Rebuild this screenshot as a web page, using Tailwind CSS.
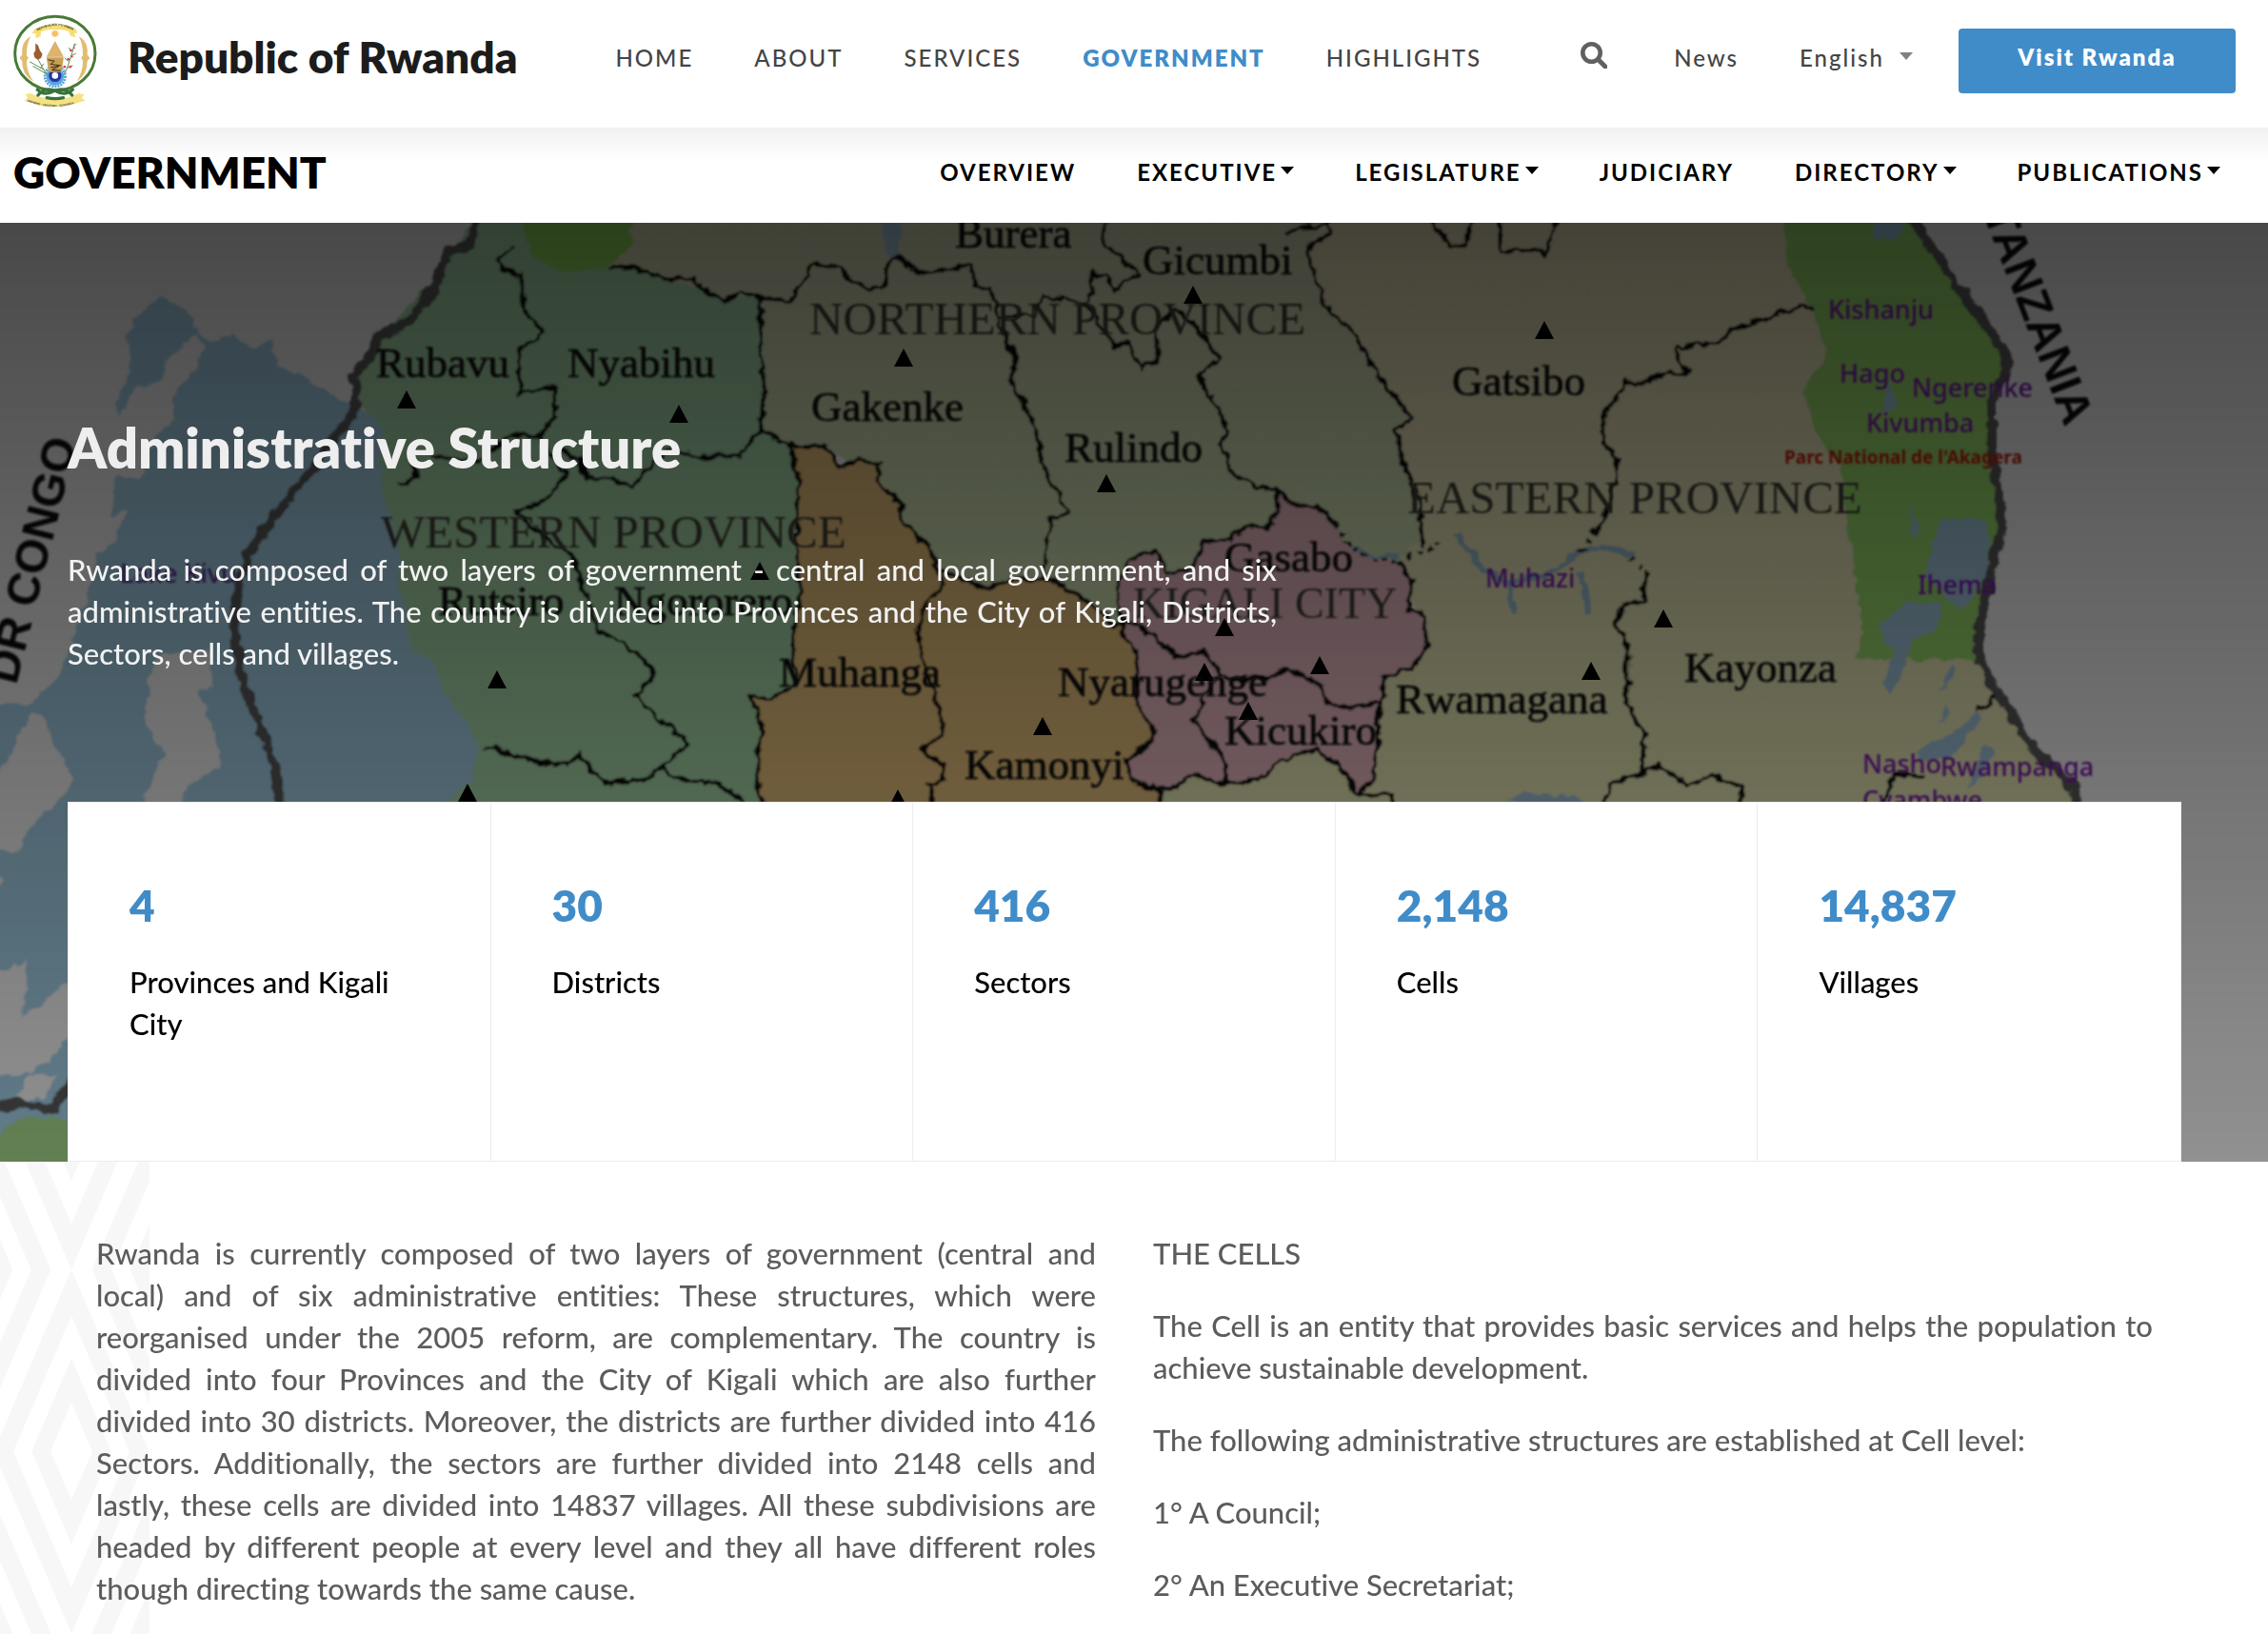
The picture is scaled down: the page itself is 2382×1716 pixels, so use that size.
<!DOCTYPE html>
<html lang="en">
<head>
    <meta charset="UTF-8">
    <meta name="viewport" content="width=device-width, initial-scale=1.0">
    <title>Administrative Structure - Republic of Rwanda</title>
    <script src="https://cdn.jsdelivr.net/npm/@tailwindcss/browser@4"></script>
    <style>
        body {
            font-family: Lato, 'Liberation Sans', sans-serif;
            font-variant-ligatures: no-common-ligatures;
        }
    </style>
</head>
<body class="bg-white min-h-screen flex flex-col overflow-x-hidden">

    <!-- Top bar -->
    <header class="flex items-center h-[134px] pl-3.5 pr-[34px] pb-1.5 whitespace-nowrap">
        <a href="#" class="flex items-center gap-8" aria-label="Republic of Rwanda home">
            <svg class="w-[88px] h-[98px] shrink-0" viewBox="42 44 265 295" aria-hidden="true">
                <defs>
                    <path id="arcTop" d="M118 97 Q172 64 228 94"/>
                    <path id="arcBottom" d="M88 312 Q172 346 254 312"/>
                </defs>
                <ellipse cx="174" cy="168" rx="127" ry="117" fill="#fff" stroke="#487a35" stroke-width="9"/>
                <path d="M101 104 L110 90 Q172 62 238 88 L245 102 L234 106 L240 118 L222 112 L218 98 Q172 84 130 98 L128 114 L112 120 L114 106 Z" fill="#f5df72"/>
                <text font-size="10" font-weight="700" fill="#333" font-family="Liberation Sans"><textPath href="#arcTop">REPUBULIKA Y'U RWANDA</textPath></text>
                <circle cx="174" cy="105" r="12" fill="#fbe3b0"/>
                <circle cx="174" cy="105" r="7" fill="#f7c46c" stroke="#f0a040" stroke-width="2"/>
                <path d="M97 114 Q66 130 70 172 L62 182 L70 192 Q70 236 106 256 Q84 228 84 190 L90 182 L84 174 Q84 136 97 114 Z M249 114 Q280 130 276 172 L284 182 L276 192 Q276 236 242 256 Q262 228 262 190 L256 182 L262 174 Q262 136 249 114 Z" fill="#e1bd70"/>
                <circle cx="174" cy="240" r="32" fill="none" stroke="#5aa2e0" stroke-width="9" stroke-dasharray="6 3"/>
                <circle cx="174" cy="240" r="28" fill="#5aa2e0"/>
                <circle cx="174" cy="238" r="15" fill="#fff" stroke="#2436a0" stroke-width="10"/>
                <path d="M174 130 L200 178 H148 Z" fill="#dfb468" stroke="#b98d47" stroke-width="1"/>
                <path d="M147 180 H201 L195 227 H154 Z" fill="#c99f55"/>
                <path d="M152 188 L172 192 L160 202 L192 206 M160 212 L186 208 L164 220 L192 222" fill="none" stroke="#3a2c15" stroke-width="3"/>
                <g stroke="#5f8f4c" stroke-width="3" fill="none">
                    <path d="M150 238 Q132 210 120 186 M140 220 L94 194 M146 232 L104 208 M128 214 L138 200"/>
                    <path d="M202 236 Q220 200 236 136 M212 214 L230 206 M218 194 L204 182 M224 176 L240 168 M228 160 L216 150 M232 146 L242 138"/>
                </g>
                <path d="M112 136 L120 142 L126 158 L134 170 L130 182 L120 188 L110 182 L106 168 L112 158 Z" fill="#9c5b31"/>
                <g fill="#cf4560">
                    <circle cx="224" cy="158" r="4"/><circle cx="234" cy="150" r="3"/><circle cx="216" cy="186" r="4"/><circle cx="222" cy="210" r="4"/><circle cx="204" cy="210" r="4"/><circle cx="228" cy="178" r="3"/>
                </g>
                <path d="M80 298 L96 294 Q172 330 248 294 L266 298 L258 308 L270 318 L254 322 Q172 352 92 322 L76 318 L88 308 Z" fill="#f5e284"/>
                <text font-size="9" font-weight="700" fill="#444" font-family="Liberation Sans" dy="7"><textPath href="#arcBottom">UBUMWE - UMURIMO - GUKUNDA</textPath></text>
                <g fill="none" stroke="#38733a" stroke-width="10" stroke-linecap="round">
                    <path d="M118 282 Q140 304 172 286 Q206 272 228 300"/>
                    <path d="M230 282 Q206 304 174 286 Q142 272 120 300"/>
                    <path d="M148 308 Q174 314 200 308"/>
                </g>
            </svg>
            <span class="text-[46px] leading-[52px] font-extrabold text-[#1c1c1c] pb-2">Republic of Rwanda</span>
        </a>

        <nav class="flex items-center gap-16 ml-[103px] pb-1.5 text-[24px] leading-8 tracking-[2px] font-medium text-[#444]">
            <a href="#">HOME</a>
            <a href="#">ABOUT</a>
            <a href="#">SERVICES</a>
            <a href="#" class="font-extrabold text-[#408cc9]">GOVERNMENT</a>
            <a href="#">HIGHLIGHTS</a>
        </nav>

        <div class="flex items-center ml-auto text-[24px] leading-8 tracking-[2px] text-[#444]">
            <button type="button" aria-label="Search" class="mr-[70px] pb-3">
                <svg class="w-7 h-7 block" viewBox="0 0 28 28" fill="none" stroke="#606060">
                    <circle cx="11.500" cy="11.500" r="9.200" stroke-width="4.600"/>
                    <path d="M18.500 18.500 L26 26" stroke-width="5" stroke-linecap="round"/>
                </svg>
            </button>
            <a href="#" class="mr-16 pb-1.5 font-medium">News</a>
            <label class="flex items-center gap-4 mr-12 pb-1.5 font-medium">
                <select aria-label="Language" class="appearance-none bg-transparent p-0">
                    <option>English</option>
                </select>
                <svg class="w-3.5 h-2 mb-1" viewBox="0 0 14 8" aria-hidden="true"><path d="M0 0 H14 L7 8 Z" fill="#808080"/></svg>
            </label>
            <a href="#" class="block w-[291px] h-[68px] pt-[14px] rounded bg-[#408cc9] text-white text-center font-extrabold">Visit Rwanda</a>
        </div>
    </header>

    <!-- Section bar -->
    <div class="flex items-center justify-between h-[100px] pl-3.5 pr-[50px] pb-1.5 whitespace-nowrap bg-linear-to-b from-[#f1f1f1] to-white to-35%">
        <h2 class="text-[46px] leading-[52px] font-extrabold text-black">GOVERNMENT</h2>
        <nav class="flex items-center gap-16 text-[24px] leading-8 tracking-[2px] font-bold text-black">
            <a href="#">OVERVIEW</a>
            <button type="button" class="flex items-center gap-1 tracking-[2px]">EXECUTIVE
                <svg class="w-3.5 h-2 mb-1" viewBox="0 0 14 8" aria-hidden="true"><path d="M0 0 H14 L7 8 Z"/></svg></button>
            <button type="button" class="flex items-center gap-1 tracking-[2px]">LEGISLATURE
                <svg class="w-3.5 h-2 mb-1" viewBox="0 0 14 8" aria-hidden="true"><path d="M0 0 H14 L7 8 Z"/></svg></button>
            <a href="#">JUDICIARY</a>
            <button type="button" class="flex items-center gap-1 tracking-[2px]">DIRECTORY
                <svg class="w-3.5 h-2 mb-1" viewBox="0 0 14 8" aria-hidden="true"><path d="M0 0 H14 L7 8 Z"/></svg></button>
            <button type="button" class="flex items-center gap-1 tracking-[2px]">PUBLICATIONS
                <svg class="w-3.5 h-2 mb-1" viewBox="0 0 14 8" aria-hidden="true"><path d="M0 0 H14 L7 8 Z"/></svg></button>
        </nav>
    </div>

    <!-- Hero with the map behind -->
    <section class="relative overflow-hidden bg-[#f2f2f2]">
        <svg class="absolute inset-0 w-full h-full" viewBox="0 234 2382 986" preserveAspectRatio="xMidYMid slice" aria-hidden="true">
            <defs>
                <!-- roughens the borders and softens them a little -->
                <filter id="rough" x="-100" y="134" width="2582" height="1186" filterUnits="userSpaceOnUse">
                    <feTurbulence type="fractalNoise" baseFrequency="0.080" numOctaves="2" seed="4" result="n"/>
                    <feDisplacementMap in="SourceGraphic" in2="n" scale="11" xChannelSelector="R" yChannelSelector="G"/>
                    <feGaussianBlur stdDeviation="1"/>
                </filter>
                <filter id="soft" x="-100" y="134" width="2582" height="1186" filterUnits="userSpaceOnUse">
                    <feGaussianBlur stdDeviation="0.800"/>
                </filter>
                <linearGradient id="eastFill" x1="0" y1="0" x2="0" y2="1">
                    <stop offset="0" stop-color="#e4dcb8"/>
                    <stop offset="1" stop-color="#e6e6b4"/>
                </linearGradient>
                <linearGradient id="northFill" x1="0" y1="0" x2="0" y2="1">
                    <stop offset="0" stop-color="#d6d6b4"/>
                    <stop offset="0.500" stop-color="#cfdab2"/>
                    <stop offset="1" stop-color="#cee0b0"/>
                </linearGradient>
            </defs>

            <g filter="url(#rough)">
                <!-- Lake Kivu -->
                <path fill="#a3cfe6" d="M168 311 L196 325 L207 349 L224 358 L247 353 L265 366 L286 356 L291 384 L327 400 L367 424 L403 440 L560 700 L560 1240 L-20 1240 L-20 738 L31 740 L66 704 L82 657 L92 625 L102 586 L122 566 L133 534 L117 542 L122 499 L148 503 L163 459 L181 440 L181 416 L205 390 L215 362 L205 352 L180 372 L168 400 L143 408 L125 438 L122 424 L138 380 L133 353 L143 333 Z"/>
                <path fill="#f2f2f2" d="M33 748 L45 752 L60 790 L77 819 L60 842 L31 870 L20 895 L-20 890 L-20 820 L8 800 Z M173 685 L219 685 L224 720 L208 725 L230 780 L230 807 L199 823 L189 850 L145 850 L173 791 L153 764 L158 704 Z M31 1010 L23 1070 L72 1030 L90 1050 L60 1107 L31 1127 L-20 1130 L-20 1025 Z M31 1130 L61 1130 L46 1153 L15 1153 Z M-20 900 L6 925 L-20 950 Z"/>
                <!-- Western province -->
                <path fill="#a6d6a8" d="M500 224 L680 224 L672 283 L740 305 L760 315 L800 309 L803 400 L799 451 L831 471 L839 507 L836 566 L841 625 L831 673 L836 720 L811 732 L788 730 L800 764 L795 803 L800 860 L450 860 L495 819 L503 784 L490 760 L467 728 L454 693 L434 685 L421 617 L418 566 L403 523 L398 483 L403 451 L375 420 L372 394 L398 353 L462 289 Z"/>
                <path fill="#a4d68c" d="M-20 1210 L10 1182 L31 1172 L90 1178 L90 1240 L-20 1240 Z"/>
                <!-- Northern province -->
                <path fill="url(#northFill)" d="M660 224 L1395 224 L1395 246 L1374 258 L1377 281 L1392 321 L1423 353 L1448 396 L1484 440 L1466 451 L1474 487 L1489 523 L1494 562 L1469 595 L1341 620 L1200 660 L985 620 L940 530 L868 468 L831 471 L799 451 L803 400 L800 309 L760 315 L740 305 L699 293 L668 283 L640 281 Z"/>
                <path fill="#8fd85c" d="M545 224 L668 224 L660 262 L636 282 L590 284 L560 270 Z"/>
                <!-- Southern province -->
                <path fill="#e5c07c" d="M829 467 L868 468 L882 491 L900 483 L923 487 L923 507 L946 530 L948 550 L976 574 L984 594 L1004 606 L1035 617 L1066 607 L1106 609 L1137 629 L1178 661 L1193 685 L1196 712 L1193 740 L1214 768 L1203 784 L1183 799 L1188 819 L1219 833 L1219 860 L798 860 L795 803 L800 764 L788 730 L811 732 L836 720 L831 673 L841 625 L836 566 L839 507 Z"/>
                <!-- Eastern province -->
                <path fill="url(#eastFill)" d="M1395 224 L2011 224 L2089 345 L2110 380 L2092 420 L2103 546 L2079 657 L2079 693 L2100 732 L2137 788 L2179 827 L2181 860 L1219 860 L1219 833 L1453 712 L1499 677 L1469 590 L1494 562 L1489 523 L1474 487 L1466 451 L1484 440 L1448 396 L1423 353 L1392 321 L1377 281 L1374 258 Z"/>
                <!-- Akagera park -->
                <path fill="#9ad86c" d="M1872 224 L1877 270 L1890 301 L1903 325 L1919 372 L1893 408 L1909 455 L1932 491 L1943 566 L1951 625 L1958 665 L1948 692 L2079 692 L2079 657 L2103 546 L2092 420 L2110 380 L2089 345 L2011 224 Z"/>
                <!-- Kigali -->
                <path fill="#e6b8c0" d="M1341 515 L1357 530 L1382 530 L1402 550 L1418 574 L1443 586 L1469 590 L1484 610 L1479 641 L1494 645 L1499 677 L1484 700 L1453 712 L1448 760 L1443 815 L1428 835 L1408 807 L1382 787 L1346 799 L1321 819 L1285 823 L1254 813 L1229 831 L1188 819 L1183 799 L1203 784 L1214 768 L1193 740 L1196 712 L1193 685 L1178 661 L1173 617 L1188 586 L1214 578 L1224 602 L1249 598 L1265 570 L1290 566 L1311 552 L1331 558 L1341 538 Z"/>
                <!-- eastern lakes -->
                <g fill="#a0c4da">
                    <path d="M1968 224 L2000 224 L1998 246 L1982 255 L1968 248 Z M2040 544 L2085 545 L2090 580 L2084 610 L2060 640 L2048 632 L2022 605 L2030 565 Z M2000 635 L2040 630 L2036 660 L2010 672 L1996 712 L1984 730 L1978 718 L1990 680 L1976 676 L1975 655 Z M2050 697 L2054 705 L2044 722 L2036 726 Z M2078 745 L2082 755 L2050 795 L2020 800 L2012 790 L2052 770 Z M2085 780 L2094 790 L2080 820 L2066 826 Z M2006 535 L2016 550 L2014 565 L2006 560 Z M1984 395 L1990 430 L1976 436 Z M2045 740 L2048 750 L2036 760 Z M1580 842 L1600 834 L1650 836 L1680 848 Z M928 234 L946 234 L943 272 L932 274 Z"/>
                </g>
                <path fill="none" stroke="#94bccf" stroke-width="6" d="M1418 574 L1443 584 L1470 584 M1530 560 L1556 598 L1585 612 M1620 606 L1660 580 L1690 574 L1715 582 M1585 612 L1590 645 M1660 600 L1668 644 M1585 612 L1620 604"/>

                <!-- district borders -->
                <g fill="none" stroke="#0c0c0c" stroke-width="4.500" stroke-linejoin="round">
                    <path d="M541 258 L523 273 L528 283 L548 289 L548 321 L570 349 L545 368 L546 412 L582 406 L584 436 L566 459 L594 499 L571 526 L541 536 L566 558 L602 586 L628 663 L653 673 L689 706 L668 732 L722 780 L696 807 L673 819 L633 823 L607 791 L597 803 L561 799 L510 784"/>
                    <path d="M696 807 L714 819 L750 821 L781 842"/>
                    <path d="M640 281 L668 283 L699 293 L724 291 L740 305 L760 315 L780 307 L800 313 L831 317 L841 299 L854 277 L879 281 L913 305 L928 303 L933 273 L943 270 L964 287 L1020 279 L1025 301 L1040 305 L1050 341 L1066 376 L1061 400 L1086 444 L1096 491 L1122 538 L1104 546 L1096 594 L1096 608"/>
                    <path d="M1045 333 L1086 331 L1094 311 L1142 319 L1158 345 L1170 364 L1186 360 L1198 386 L1216 380 L1214 345 L1234 325 L1254 341 L1280 376 L1260 396 L1288 447 L1283 467 L1295 499 L1321 511 L1341 515"/>
                    <path d="M1160 234 L1158 254 L1196 287 L1170 305 L1162 290 L1147 287 L1145 317"/>
                    <path d="M1395 224 L1395 246 L1374 258 L1377 281 L1392 321 L1423 353 L1448 396 L1484 440 L1466 451 L1474 487 L1489 523 L1494 562"/>
                    <path d="M1351 246 L1374 238 L1395 236 M1499 224 L1522 258 L1538 258 L1548 224 M1575 224 L1576 264 L1618 262 L1624 268 L1638 224"/>
                    <path d="M800 313 L798 368 L803 400 L799 451 L776 479 L735 479 L700 473 L684 487 L663 511 L643 503 L615 503 L610 483 L584 470 M434 479 L436 503 L418 510 M454 479 L505 485 L536 455 L566 459"/>
                    <path d="M799 451 L831 471 L839 507 L836 566 L841 625 L831 673 L836 720 L811 732 L788 730 L800 764 L795 803 L800 850"/>
                    <path d="M829 467 L868 468 L882 491 L900 483 L923 487 L923 507 L946 530 L948 550 L976 574 L984 594 L1004 606 L1035 617 L1066 607 L1106 609 L1137 629 L1178 661 L1193 685 L1196 712 L1193 740 L1214 768 L1203 784 L1183 799 L1188 819 L1219 833 L1219 850"/>
                    <path d="M984 594 L992 613 L971 637 L964 665 L971 700 L981 728 L992 770 L969 787 L989 803 L992 819 L976 823 L981 850"/>
                    <path d="M1402 550 L1382 530 L1357 530 L1341 515 L1341 538 L1331 558 L1311 552 L1290 566 L1265 570 L1249 598 L1224 602 L1214 578 L1188 586 L1173 617 L1178 661"/>
                    <path d="M1469 590 L1484 610 L1479 641 L1494 645 L1499 677 L1484 700 L1453 712 L1448 760 L1443 815 L1428 835 L1408 807 L1382 787 L1346 799 L1321 819 L1285 823 L1254 813 L1229 831 L1188 819"/>
                    <path d="M1402 550 L1418 574 L1443 588 L1469 590 M1478 584 L1500 578 L1515 566 M1675 558 L1660 580 M1712 586 L1730 602" stroke-dasharray="5 6"/>
                    <path d="M1494 562 L1494 574 M1178 649 L1214 669 L1234 689 L1265 685 L1280 704 L1290 714 L1331 712 L1351 702 L1387 720 L1400 744 L1453 738 M1280 712 L1265 732 L1252 756 L1270 776 L1285 799 L1288 823"/>
                    <path d="M1903 325 L1895 320 L1822 345 L1806 359 L1762 364 L1762 380 L1775 390 L1738 394 L1733 402 L1707 402 L1683 440 L1683 463 L1699 481 L1696 507 L1688 538 L1675 558"/>
                    <path d="M1730 602 L1725 633 L1704 633 L1697 657 L1709 677 L1709 740 L1727 772 L1724 813 L1691 823 L1683 850 M1724 813 L1743 803 L1770 825 L1796 813 L1830 827 L1825 850"/>
                    <path d="M2096 730 L2090 740 L2076 744 M1976 850 L1990 812 L2020 816 M1428 835 L1460 833 L1468 850"/>
                </g>
                <!-- country border -->
                <g fill="none" stroke="#5a5a5a" stroke-width="10" stroke-linejoin="round">
                    <path d="M500 224 L495 256 L472 264 L462 289 L446 319 L429 337 L398 353 L390 374 L372 394 L375 420 L370 436 L352 459 L327 495 L291 538 L260 582 L250 617 L246 665 L255 716 L270 756 L286 799 L296 850"/>
                    <path d="M2005 224 L2058 305 L2089 345 L2110 380 L2092 420 L2092 475 L2103 546 L2089 610 L2079 657 L2079 693 L2100 732 L2137 788 L2179 827 L2181 860"/>
                    <path d="M-10 1163 L23 1158 L54 1166 L80 1130"/>
                </g>
            </g>

            <!-- town markers -->
            <path fill="#000" d="M427 410 l10 19 h-20 z M713 425 l10 19 h-20 z M522 704 l10 19 h-20 z M491 823 l10 19 h-20 z M798 590 l10 19 h-20 z M949 366 l10 19 h-20 z M1253 300 l10 19 h-20 z M1162 498 l10 19 h-20 z M1095 753 l10 19 h-20 z M943 829 l10 19 h-20 z M1286 649 l10 19 h-20 z M1386 689 l10 19 h-20 z M1265 696 l10 19 h-20 z M1311 737 l10 19 h-20 z M1622 337 l10 19 h-20 z M1747 640 l10 19 h-20 z M1671 695 l10 19 h-20 z"/>

            <g filter="url(#soft)" font-family="'Liberation Serif', serif">
                <g font-size="45" fill="#0c0c0c" stroke="#0c0c0c" stroke-width="0.600">
                    <text x="395" y="396">Rubavu</text>
                    <text x="596" y="396">Nyabihu</text>
                    <text x="1003" y="260">Burera</text>
                    <text x="1200" y="288">Gicumbi</text>
                    <text x="852" y="442">Gakenke</text>
                    <text x="1118" y="485">Rulindo</text>
                    <text x="1525" y="415">Gatsibo</text>
                    <text x="460" y="646">Rutsiro</text>
                    <text x="645" y="646">Ngororero</text>
                    <text x="1286" y="600">Gasabo</text>
                    <text x="818" y="721">Muhanga</text>
                    <text x="1111" y="731">Nyarugenge</text>
                    <text x="1013" y="818">Kamonyi</text>
                    <text x="1286" y="782">Kicukiro</text>
                    <text x="1466" y="749">Rwamagana</text>
                    <text x="1769" y="716">Kayonza</text>
                </g>
                <g font-size="49" fill="#3c3c34">
                    <text x="400" y="575">WESTERN PROVINCE</text>
                    <text x="850" y="351">NORTHERN PROVINCE</text>
                    <text x="1478" y="539">EASTERN PROVINCE</text>
                    <text x="1190" y="649" font-size="46">KIGALI CITY</text>
                </g>
            </g>
            <g filter="url(#soft)" font-family="'Noto Sans', sans-serif" font-size="27" font-weight="500" fill="#7a1cb0">
                <text x="1920" y="335">Kishanju</text>
                <text x="1932" y="402">Hago</text>
                <text x="2008" y="417">Ngerenke</text>
                <text x="1960" y="454">Kivumba</text>
                <text x="1560" y="617">Muhazi</text>
                <text x="2014" y="624">Ihema</text>
                <text x="1956" y="812">Nasho</text>
                <text x="2038" y="815">Rwampanga</text>
                <text x="1956" y="850">Cyambwe</text>
                <text x="126" y="612" fill="#5a2c94">Lake Kivu</text>
                <text x="1874" y="487" font-size="19" font-weight="700" fill="#c41c10">Parc National de l'Akagera</text>
            </g>
            <g filter="url(#soft)" font-family="'Liberation Sans', sans-serif" font-size="48" font-weight="700" fill="#0a0a0a">
                <text transform="translate(2169 449) rotate(69)" text-anchor="end">TANZANIA</text>
                <text transform="translate(17 720) rotate(-76)">DR CONGO</text>
            </g>
        </svg>
        <div class="absolute inset-0 bg-linear-to-b from-black/70 to-black/40"></div>

        <div class="relative pl-[71px] pr-[91px] pt-[200px]">
            <h1 class="text-[58px] leading-[72px] font-extrabold text-[#eee]">Administrative Structure</h1>
            <p class="mt-[70px] max-w-[1270px] text-[31px] leading-[44px] font-medium text-[#f2f2f2] text-justify">Rwanda is composed of two layers of government - central and local government, and six administrative entities. The country is divided into Provinces and the City of Kigali, Districts, Sectors, cells and villages.</p>

            <dl class="mt-[134px] grid grid-cols-5 min-h-[378px] bg-white border border-[#ececec] divide-x divide-[#ececec] text-[31px] leading-[44px] font-medium text-black">
                <div class="flex flex-col-reverse justify-end gap-[30px] px-16 pt-20">
                    <dt>Provinces and Kigali City</dt>
                    <dd class="text-[46px] leading-[56px] font-extrabold text-[#408cc9]">4</dd>
                </div>
                <div class="flex flex-col-reverse justify-end gap-[30px] px-16 pt-20">
                    <dt>Districts</dt>
                    <dd class="text-[46px] leading-[56px] font-extrabold text-[#408cc9]">30</dd>
                </div>
                <div class="flex flex-col-reverse justify-end gap-[30px] px-16 pt-20">
                    <dt>Sectors</dt>
                    <dd class="text-[46px] leading-[56px] font-extrabold text-[#408cc9]">416</dd>
                </div>
                <div class="flex flex-col-reverse justify-end gap-[30px] px-16 pt-20">
                    <dt>Cells</dt>
                    <dd class="text-[46px] leading-[56px] font-extrabold text-[#408cc9]">2,148</dd>
                </div>
                <div class="flex flex-col-reverse justify-end gap-[30px] px-16 pt-20">
                    <dt>Villages</dt>
                    <dd class="text-[46px] leading-[56px] font-extrabold text-[#408cc9]">14,837</dd>
                </div>
            </dl>
        </div>
    </section>

    <!-- Article -->
    <main class="relative grow overflow-hidden">
        <svg class="absolute left-0 top-0 w-[157px] h-full" viewBox="0 30 471 1488" preserveAspectRatio="xMinYMin slice" aria-hidden="true">
            <defs>
                <g id="diamond">
                    <path fill="#f7f7f7" fill-rule="evenodd" d="M0 -573 L245 0 L0 573 L-245 0 Z M0 -428 L183 0 L0 428 L-183 0 Z"/>
                    <path fill="#f7f7f7" fill-rule="evenodd" d="M0 -293 L125 0 L0 293 L-125 0 Z M0 -153 L66 0 L0 153 L-66 0 Z"/>
                </g>
            </defs>
            <use href="#diamond" x="225" y="-203"/>
            <use href="#diamond" x="225" y="943"/>
            <use href="#diamond" x="225" y="2089"/>
            <use href="#diamond" x="-85" y="370"/>
            <use href="#diamond" x="535" y="370"/>
            <use href="#diamond" x="-85" y="1516"/>
            <use href="#diamond" x="535" y="1516"/>
        </svg>
        <div class="relative grid grid-cols-2 gap-[60px] pl-[101px] pr-[121px] pt-[74px] text-[31px] leading-[44px] font-medium text-[#5c5c5c] text-justify">
            <p>Rwanda is currently composed of two layers of government (central and local) and of six administrative entities: These structures, which were reorganised under the 2005 reform, are complementary. The country is divided into four Provinces and the City of Kigali which are also further divided into 30 districts. Moreover, the districts are further divided into 416 Sectors. Additionally, the sectors are further divided into 2148 cells and lastly, these cells are divided into 14837 villages. All these subdivisions are headed by different people at every level and they all have different roles though directing towards the same cause.</p>
            <div class="flex flex-col gap-8">
                <p>THE CELLS</p>
                <p>The Cell is an entity that provides basic services and helps the population to achieve sustainable development.</p>
                <p>The following administrative structures are established at Cell level:</p>
                <p>1° A Council;</p>
                <p>2° An Executive Secretariat;</p>
            </div>
        </div>
    </main>

</body>
</html>
